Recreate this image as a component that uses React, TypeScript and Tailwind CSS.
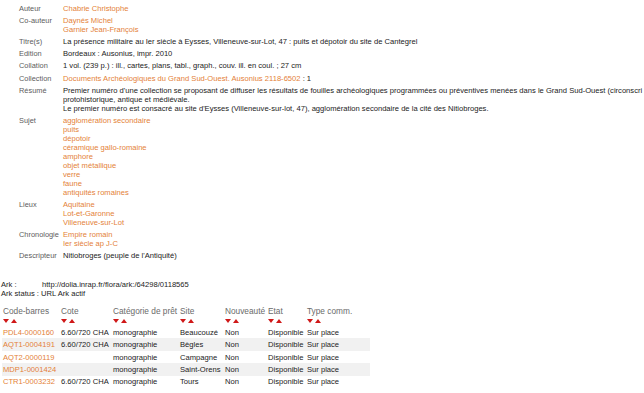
import React from 'react';

const ORANGE = 'text-[#e47f38]';

type Field = { label: string; lines: React.ReactNode[]; link?: boolean };

const fields: Field[] = [
  { label: 'Auteur', lines: ['Chabrie Christophe'], link: true },
  { label: 'Co-auteur', lines: ['Daynés Michel', 'Garnier Jean-François'], link: true },
  {
    label: 'Titre(s)',
    lines: ['La présence militaire au Ier siècle à Eysses, Villeneuve-sur-Lot, 47 : puits et dépotoir du site de Cantegrel'],
  },
  { label: 'Edition', lines: ['Bordeaux : Ausonius, impr. 2010'] },
  { label: 'Collation', lines: ['1 vol. (239 p.) : ill., cartes, plans, tabl., graph., couv. ill. en coul. ; 27 cm'] },
  {
    label: 'Collection',
    lines: [
      <>
        <span className={ORANGE}>Documents Archéologiques du Grand Sud-Ouest. Ausonius 2118-6502</span> : 1
      </>,
    ],
  },
  {
    label: 'Résumé',
    lines: [
      "Premier numéro d'une collection se proposant de diffuser les résultats de fouilles archéologiques programmées ou préventives menées dans le Grand Sud-Ouest (circonscri",
      'protohistorique, antique et médiévale.',
      "Le premier numéro est consacré au site d'Eysses (Villeneuve-sur-lot, 47), agglomération secondaire de la cité des Nitiobroges.",
    ],
  },
  {
    label: 'Sujet',
    lines: [
      'agglomération secondaire',
      'puits',
      'dépotoir',
      'céramique gallo-romaine',
      'amphore',
      'objet métallique',
      'verre',
      'faune',
      'antiquités romaines',
    ],
    link: true,
  },
  { label: 'Lieux', lines: ['Aquitaine', 'Lot-et-Garonne', 'Villeneuve-sur-Lot'], link: true },
  { label: 'Chronologie', lines: ['Empire romain', 'Ier siècle ap J-C'], link: true },
  { label: 'Descripteur', lines: ["Nitiobroges (peuple de l'Antiquité)"] },
];

const headers = ['Code-barres', 'Cote', 'Catégorie de prêt', 'Site', 'Nouveauté', 'Etat', 'Type comm.'];

const items = [
  ['PDL4-0000160', '6.60/720 CHA', 'Beaucouzé'],
  ['AQT1-0004191', '6.60/720 CHA', 'Bègles'],
  ['AQT2-0000119', '', 'Campagne'],
  ['MDP1-0001424', '', 'Saint-Orens'],
  ['CTR1-0003232', '6.60/720 CHA', 'Tours'],
];

const COLS = 'grid grid-cols-[58px_52px_67px_45px_43px_39px_64px]';

function SortArrows() {
  return (
    <div className="flex gap-[2px] h-[4px] mt-[3px]">
      <svg width="6" height="4" viewBox="0 0 6 4">
        <polygon points="0,0 6,0 3,4" fill="#d01818" />
      </svg>
      <svg width="6" height="4" viewBox="0 0 6 4">
        <polygon points="0,4 6,4 3,0" fill="#d01818" />
      </svg>
    </div>
  );
}

export default function App() {
  return (
    <div className="w-[644px] h-[393px] overflow-hidden bg-white text-[#222] font-['Liberation_Sans',Arial,sans-serif] text-[7.6px] leading-[9px]">
      {/* Notice */}
      <div className="pl-[19px] pt-[2px]">
        {fields.map((f) => (
          <div key={f.label} className="flex py-[1.6px]">
            <div className="w-[44px] shrink-0 text-[#5c5c5c] text-[7.4px]">{f.label}</div>
            <div className={`whitespace-nowrap ${f.link ? ORANGE : ''}`}>
              {f.lines.map((l, i) => (
                <div key={i}>{l}</div>
              ))}
            </div>
          </div>
        ))}
      </div>

      {/* Ark */}
      <div className="pl-[1px] mt-[18px]">
        <div className="flex">
          <span className="w-[41px]">Ark :</span>
          <span>http://dolia.inrap.fr/flora/ark:/64298/0118565</span>
        </div>
        <div>Ark status : URL Ark actif</div>
      </div>

      {/* Exemplaires */}
      <div className="ml-[2px] mt-[8px] w-[368px]">
        <div className={COLS}>
          {headers.map((h) => (
            <div key={h} className="px-[1px] whitespace-nowrap">
              <div className="text-[#6a6a6a] text-[8.3px] leading-[10px]">{h}</div>
              <SortArrows />
            </div>
          ))}
        </div>
        <div className="mt-[3px]">
          {items.map((it, i) => (
            <div
              key={it[0]}
              className={`${COLS} h-[12.4px] items-center whitespace-nowrap ${i % 2 === 1 ? 'bg-[#f1f1f1]' : ''}`}
            >
              <div className={`px-[1px] ${ORANGE}`}>{it[0]}</div>
              <div className="px-[1px]">{it[1]}</div>
              <div className="px-[1px]">monographie</div>
              <div className="px-[1px]">{it[2]}</div>
              <div className="px-[1px]">Non</div>
              <div className="px-[1px]">Disponible</div>
              <div className="px-[1px]">Sur place</div>
            </div>
          ))}
        </div>
      </div>
    </div>
  );
}
